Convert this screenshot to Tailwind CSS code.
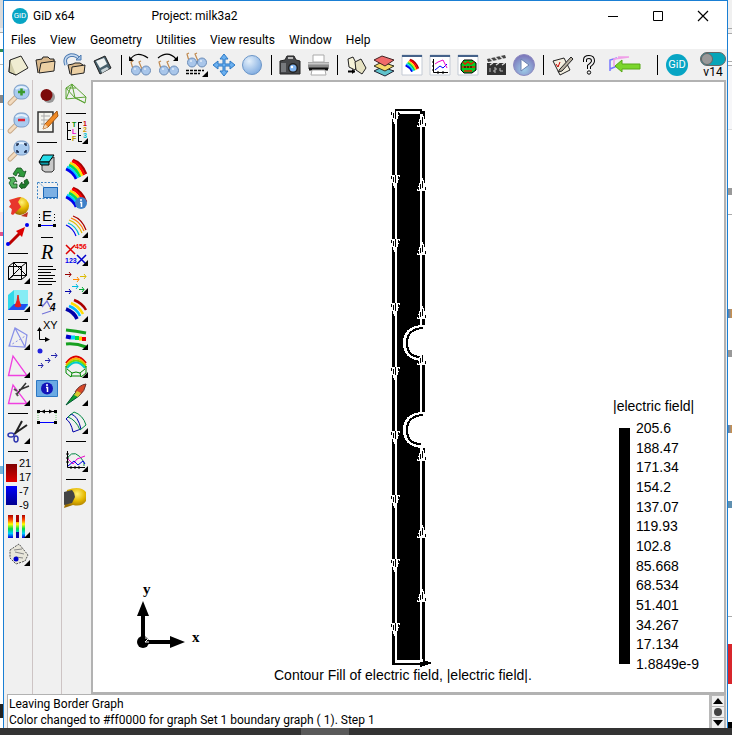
<!DOCTYPE html>
<html lang="en">
<head>
  <meta charset="UTF-8" />
  <meta name="viewport" content="width=device-width, initial-scale=1.0" />
  <title>GiD x64 - Project: milk3a2</title>
  <script src="https://cdn.jsdelivr.net/npm/@tailwindcss/browser@4"></script>
</head>
<body class="h-screen flex flex-col overflow-hidden bg-white text-black text-[12px] leading-4 font-[Roboto,sans-serif]">

  <!-- Shared gradients and small shapes -->
  <svg class="absolute w-0 h-0" aria-hidden="true">
    <defs>
      <radialGradient id="ball" cx="35%" cy="30%" r="75%"><stop offset="0" stop-color="#e4f0fb"/><stop offset="1" stop-color="#7fabe0"/></radialGradient>
      <radialGradient id="play" cx="50%" cy="70%" r="70%"><stop offset="0" stop-color="#9fd0ea"/><stop offset="1" stop-color="#7a72b8"/></radialGradient>
      <radialGradient id="gold" cx="60%" cy="30%" r="70%"><stop offset="0" stop-color="#fff27a"/><stop offset="0.5" stop-color="#e5b800"/><stop offset="1" stop-color="#9a6c00"/></radialGradient>
      <linearGradient id="spectrum" x1="0" y1="0" x2="0" y2="1"><stop offset="0" stop-color="#a00"/><stop offset="0.2" stop-color="#f40"/><stop offset="0.4" stop-color="#ff0"/><stop offset="0.6" stop-color="#0d4"/><stop offset="0.8" stop-color="#0cf"/><stop offset="1" stop-color="#00d"/></linearGradient>
      <symbol id="tri" viewBox="0 0 28 28"><path d="M26 20v6h-6z"/></symbol>
      <symbol id="glasses" viewBox="0 0 24 16">
        <path d="M4 9L2 2l2-1M13 9l-3-7 2-1" fill="none" stroke="#c08a50" stroke-width="1.2"/>
        <path d="M9 10h5" stroke="#5c7fae" stroke-width="2"/>
        <circle cx="7" cy="10.500" r="4.500" fill="#a9c6ea" stroke="#6c8db8"/>
        <circle cx="17" cy="10.500" r="4.500" fill="#a9c6ea" stroke="#6c8db8"/>
        <path d="M5 9h2M15 9h2" stroke="#fff"/>
      </symbol>
      <symbol id="lens" viewBox="0 0 28 28">
        <path d="M12 17l-6 6" stroke="#c9a987" stroke-width="5" stroke-linecap="round"/>
        <path d="M12 17l-6 6" stroke="#f3dcc0" stroke-width="3" stroke-linecap="round"/>
        <rect x="10" y="5" width="15" height="14" rx="6" fill="#a9cbef" stroke="#7b9cc6"/>
        <path d="M12 9q5-4 11 0" stroke="#e4f1fd" stroke-width="2" fill="none"/>
      </symbol>
      <symbol id="rainbow" viewBox="0 0 28 28">
        <g fill="none" stroke-width="2.600">
          <path d="M11 4q9 3 13 14" stroke="#a00"/><path d="M10 5q8 3 12 14" stroke="#f00"/>
          <path d="M8 7q8 3 12 13" stroke="#fd0"/><path d="M7 9q7 3 11 12" stroke="#0d5"/>
          <path d="M5 11q7 3 11 11" stroke="#0cf"/><path d="M4 13q7 3 10 10" stroke="#00e"/>
        </g>
      </symbol>
      <symbol id="win" viewBox="0 0 28 28"><path d="M4 4h20v20H4z" fill="#fff" stroke="#c3cad4"/><path d="M4 4h20v2H4z" fill="#45628a"/></symbol>
      <symbol id="down" viewBox="0 0 10 13"><path d="M0 0h10L6 13H4z" fill="#fff"/><path d="M1.500 1v3M3.500 2v5M5.500 0v8M8.500 1v3" stroke="#000"/></symbol>
      <symbol id="up" viewBox="0 0 10 13"><path d="M0 13h10L6 0H4z" fill="#fff"/><path d="M1.500 12V9M3.500 11V6M5.500 10V3M8.500 12V9" stroke="#000"/></symbol>
    </defs>
  </svg>

  <div class="flex-1 min-h-0 flex">

    <!-- Page showing behind the window, left -->
    <div class="w-[3px] shrink-0 flex flex-col overflow-hidden" aria-hidden="true">
      <div class="h-7 bg-[#dadada]"></div>
      <div class="h-[5px] bg-[#efefef] border-b border-[#aaa]"></div>
      <div class="h-4"></div>
      <div class="h-[3px] bg-[#2e8b57]"></div>
      <div class="h-3"></div>
      <div class="h-px bg-[#bbb]"></div>
      <div class="h-[30px]"></div>
      <div class="h-2 bg-[#888]"></div>
      <div class="h-[27px] border-b border-[#ddd]"></div>
      <div class="h-[82px]"></div>
      <div class="h-6 bg-[#fde8ee] border-b-4 border-[#e0558a]"></div>
      <div class="h-[230px]"></div>
      <div class="h-2 bg-[#7ab6d8]"></div>
      <div class="flex-1"></div>
      <div class="h-[14px] mb-2.5 bg-[#222]"></div>
    </div>

    <!-- Application window -->
    <div class="flex-1 min-w-0 flex flex-col bg-[#f0f0f0] border border-b-0 border-[#1a7fd4]">

      <header class="h-[30px] shrink-0 bg-white flex items-center pl-2">
        <span class="size-4 rounded-full bg-[#07a5c4] text-white text-[8px] leading-4 text-center">GiD</span>
        <span class="ml-[5px]">GiD x64</span>
        <h1 class="ml-[77px]">Project: milk3a2</h1>
        <div class="ml-auto mr-0.5 flex">
          <button class="w-[45px] h-7 grid place-items-center" aria-label="Minimize"><svg class="size-3" viewBox="0 0 12 12"><path d="M1 6.500h10" stroke="#000"/></svg></button>
          <button class="w-[45px] h-7 grid place-items-center" aria-label="Maximize"><svg class="size-3" viewBox="0 0 12 12"><path d="M1.500 1.500h9v9h-9z" fill="none" stroke="#000"/></svg></button>
          <button class="w-[45px] h-7 grid place-items-center" aria-label="Close"><svg class="size-3" viewBox="0 0 12 12"><path d="M1 1l10 10M11 1L1 11" stroke="#000" stroke-width="1.200"/></svg></button>
        </div>
      </header>

      <nav class="h-[18px] shrink-0 bg-white flex items-center gap-[14px] pl-[7px]">
        <button>Files</button>
        <button>View</button>
        <button>Geometry</button>
        <button>Utilities</button>
        <button>View results</button>
        <button>Window</button>
        <button>Help</button>
      </nav>

      <!-- Top toolbar -->
      <div class="h-[31px] shrink-0 flex items-center" role="toolbar" aria-label="Standard">
        <button class="w-7" aria-label="New"><svg class="size-7" viewBox="0 0 28 28"><path d="M6 9l11-4 7 12-12 7-7-3z" fill="#efecd2" stroke="#222"/><path d="M6 9l-1 12 7 3" fill="#cfcba8" stroke="#222"/></svg></button>
        <button class="w-7" aria-label="Open"><svg class="size-7" viewBox="0 0 28 28"><path d="M6 22L4 9l6-1 1-2h5l2 2h4v4" fill="#d8b88c" stroke="#222"/><path d="M7 22l2-10 14-2-1 10z" fill="#ecd0a4" stroke="#222"/></svg></button>
        <button class="w-7" aria-label="Import"><svg class="size-7" viewBox="0 0 28 28"><path d="M10 23L8 14l5-1 2-1h5l3 2v3" fill="#d8b88c" stroke="#222"/><path d="M11 24l1-8 13-2-1 8z" fill="#ecd0a4" stroke="#222"/><path d="M6 14Q3 6 11 4q6 0 8 4" fill="none" stroke="#4d7ab0" stroke-width="3.500"/><path d="M6 14Q3 6 11 4q6 0 8 4" fill="none" stroke="#c5d9f0" stroke-width="1.500"/><path d="M16 9h5V4z" fill="#a4c2e6" stroke="#4d7ab0"/></svg></button>
        <button class="w-7" aria-label="Save"><svg class="size-7" viewBox="0 0 28 28"><path d="M6 10L17 5l6 12-11 6z" fill="#47606c" stroke="#222"/><path d="M8 10l8-3 3 6-7 4z" fill="#eef2f2"/><path d="M13 19l6-3 2 2-7 4z" fill="#c9d5d9"/></svg></button>
        <span class="w-[10px] h-5 flex justify-center"><i class="w-px bg-black"></i></span>
        <button class="w-7" aria-label="Previous view"><svg class="size-7" viewBox="0 0 28 28"><path d="M4 9Q10-1 22 7" fill="none" stroke="#000" stroke-width="1.200"/><path d="M3 5v5h5z"/><use href="#glasses" x="3" y="9" width="24" height="16"/></svg></button>
        <button class="w-7" aria-label="Next view"><svg class="size-7" viewBox="0 0 28 28"><path d="M4 7Q14-1 22 8" fill="none" stroke="#000" stroke-width="1.200"/><path d="M24 5v5h-5z"/><use href="#glasses" x="3" y="9" width="24" height="16"/></svg></button>
        <button class="w-7" aria-label="View styles"><svg class="size-7" viewBox="0 0 28 28"><use href="#glasses" x="3" y="1" width="24" height="16"/><path d="M4 19.500h18M4 22.500h14" stroke="#000" stroke-width="1.500" stroke-dasharray="3 1"/><use href="#tri" width="28" height="28"/></svg></button>
        <button class="w-7" aria-label="Pan"><svg class="size-7" viewBox="0 0 28 28"><path d="M14 3l4 5h-3v5h5v-3l5 4-5 4v-3h-5v5h3l-4 5-4-5h3v-5H8v3l-5-4 5-4v3h5V8h-3z" fill="#6bb0f0" stroke="#2c78c4"/></svg></button>
        <button class="w-7" aria-label="Rotate"><svg class="size-7" viewBox="0 0 28 28"><circle cx="14" cy="14" r="9.500" fill="url(#ball)" stroke="#6c96c8"/></svg></button>
        <span class="w-[10px] h-5 flex justify-center"><i class="w-px bg-black"></i></span>
        <button class="w-7" aria-label="Snapshot"><svg class="size-7" viewBox="0 0 28 28"><path d="M4 10l5-1 2-4h7l2 4 4 1v13H4z" fill="#46474a" stroke="#222"/><path d="M5 12h5v9H5z" fill="#77797d"/><path d="M12 7h5" stroke="#bbb" stroke-width="2"/><circle cx="17" cy="17" r="5" fill="#222"/><circle cx="17" cy="17" r="3.500" fill="#7fb2ee"/><circle cx="16" cy="16" r="1.200" fill="#fff"/></svg></button>
        <button class="w-7" aria-label="Print"><svg class="size-7" viewBox="0 0 28 28"><path d="M9 4h11v7H9z" fill="#fff" stroke="#aaa"/><path d="M4 11h21v7H4z" fill="#8c8c8c"/><path d="M4 12.500h21" stroke="#c8c8c8" stroke-width="2"/><path d="M5 18h19" stroke="#111" stroke-width="3"/><path d="M8 19h13l1 5H7z" fill="#fff" stroke="#aaa"/></svg></button>
        <span class="w-[10px] h-5 flex justify-center"><i class="w-px bg-black"></i></span>
        <button class="w-7" aria-label="Preprocess"><svg class="size-7" viewBox="0 0 28 28"><path d="M6 8l5-2 4 8-2 5-6-3z" fill="#f6f3d8" stroke="#222"/><path d="M13 11l6-3 5 9-4 6-6-4z" fill="#e6e2c2" stroke="#222"/><path d="M6 20.500h7" stroke="#000" stroke-width="2"/><path d="M10 18l3 2.500-3 2.500z"/></svg></button>
        <button class="w-7" aria-label="Layers"><svg class="size-7" viewBox="0 0 28 28"><path d="M4 20l8-4 12 4-9 5z" fill="#5fc3cc" stroke="#223"/><path d="M4 15l8-4 12 4-9 5z" fill="#f5d96a" stroke="#332"/><path d="M4 9l8-4 12 4-9 6z" fill="#f06a6a" stroke="#422"/></svg></button>
        <button class="w-7" aria-label="Contour window"><svg class="size-7" viewBox="0 0 28 28"><use href="#win" width="28" height="28"/><use href="#rainbow" x="5" y="6" width="18" height="18"/></svg></button>
        <button class="w-7" aria-label="Graphs window"><svg class="size-7" viewBox="0 0 28 28"><use href="#win" width="28" height="28"/><path d="M7.500 8v13.500H22M6 11h2M6 15h2M6 19h2M12 20v3M17 20v3" fill="none" stroke="#000"/><path d="M9 19l5-4 3 2 4-4" fill="none" stroke="#00f"/><path d="M9 13l3-2 5-2 4 8" fill="none" stroke="#e0c"/></svg></button>
        <button class="w-7" aria-label="Deformation window"><svg class="size-7" viewBox="0 0 28 28"><use href="#win" width="28" height="28"/><path d="M7 13l3-4h8l4 3v7l-4 3h-8l-3-3z" fill="#0c2" stroke="#000"/><path d="M9 11l2 2 3-2 3 2 3-2M8 16h13M10 20h8" fill="none" stroke="#d20" stroke-width="1.500"/><path d="M10 16h8" stroke="#000" stroke-dasharray="2 1"/></svg></button>
        <button class="w-7" aria-label="Animate"><svg class="size-7" viewBox="0 0 28 28"><path d="M5 12h19v12H5z" fill="#333"/><path d="M5 8l18-4 1 3L6 11z" fill="#444"/><path d="M8 7l3 3M13 6l3 3M18 5l3 3M8 14l3-2M14 14l3-2M20 14l3-2" stroke="#ddd" stroke-width="1.500"/><path d="M8 17v4M12 17h2v2h-2v2h2M18 17v3h3" stroke="#bbb" fill="none"/></svg></button>
        <button class="w-7" aria-label="Play"><svg class="size-7" viewBox="0 0 28 28"><circle cx="14" cy="14" r="10.500" fill="url(#play)" stroke="#8d8ac0"/><path d="M11 8v12l8-6z" fill="#fff" stroke="#6a80b0"/></svg></button>
        <span class="w-[10px] h-5 flex justify-center"><i class="w-px bg-black"></i></span>
        <button class="w-7" aria-label="Preferences"><svg class="size-7" viewBox="0 0 28 28"><path d="M5 10l11-3 6 12-10 5z" fill="#f3efe0" stroke="#222"/><path d="M8 13l2 3 2-5" fill="none" stroke="#c00"/><path d="M23 6L12 18l-2 3 4-1L25 8z" fill="#b7b0a0" stroke="#222"/></svg></button>
        <button class="w-7" aria-label="Help"><svg class="size-7" viewBox="0 0 28 28"><path d="M9 11V9q0-3 4-3t4 4q0 2-4 5v3" fill="none" stroke="#000" stroke-width="4"/><path d="M9 11V9q0-3 4-3t4 4q0 2-4 5v3" fill="none" stroke="#f0f0f0" stroke-width="2"/><circle cx="13" cy="21.500" r="1.700" fill="#f0f0f0" stroke="#000"/></svg></button>
        <button class="w-12" aria-label="Back to preprocess"><svg class="w-11 h-7" viewBox="0 0 44 28"><path d="M6 20V9l7-2M6 18l7-3" fill="none" stroke="#77f" stroke-width="1.500"/><path d="M14 6h11M10 15V8l15-2" fill="none" stroke="#f0a0e8" stroke-width="1.500"/><path d="M11 15l7-6v4h18v5H18v3z" fill="#7bd62c" stroke="#58a818"/></svg></button>
        <span class="w-[10px] h-5 flex justify-center"><i class="w-px bg-black"></i></span>
        <button class="w-[30px] grid place-items-center" aria-label="GiD home"><span class="size-[22px] rounded-full bg-[#07a5c4] text-white text-[11px] leading-[22px] text-center">GiD</span></button>
        <label class="ml-auto w-7 flex flex-col items-center text-[12px] leading-[12px]">
          <input type="checkbox" checked class="peer sr-only" />
          <span class="w-[26px] h-[14px] rounded-full bg-[#07a5b8] border border-[#666]"><i class="block size-3 rounded-full bg-[#999] border border-[#666]"></i></span>
          v14
        </label>
      </div>

      <div class="flex-1 min-h-0 flex">

        <!-- Left toolbars -->
        <div class="w-[29px] shrink-0 flex flex-col items-start border-r border-[#cdc4c4]" role="toolbar" aria-label="View">
          <button class="size-7" aria-label="Zoom in"><svg viewBox="0 0 28 28"><use href="#lens" width="28" height="28"/><path d="M14 12h7M17.500 8.500v7" stroke="#3a9a2c" stroke-width="2.500"/></svg></button>
          <button class="size-7" aria-label="Zoom out"><svg viewBox="0 0 28 28"><use href="#lens" width="28" height="28"/><path d="M14 12h7" stroke="#e02030" stroke-width="2.500"/></svg></button>
          <button class="size-7" aria-label="Zoom frame"><svg viewBox="0 0 28 28"><use href="#lens" width="28" height="28"/><path d="M13 10V8h2M20 8h2v2M22 14v2h-2M15 16h-2v-2" fill="none" stroke="#124" stroke-width="1.500"/></svg></button>
          <button class="size-7" aria-label="Redraw"><svg viewBox="0 0 28 28"><g stroke="#124d1b" stroke-width="0.800"><path d="M9 10l4-6h4l3 4 2-1-2 6-6-1 2-1-2-3-2 4z" fill="#2f9a3c"/><path d="M4 14l6-1 3 5-2-1-2 3h4v4H8l-3-5 2-3z" fill="#55b560"/><path d="M23 15l2 4-4 5h-3v1l-3-3 3-4v2h3l-1-3z" fill="#1f7a2c"/></g></svg></button>
          <button class="size-7" aria-label="Render"><svg viewBox="0 0 28 28"><circle cx="16" cy="14" r="9" fill="url(#gold)"/><path d="M5 8l7-2 5-1-3 5 3 5-5 5-3 3-2-1 1-5-3-2 2-3z" fill="#e8362c"/><path d="M17 24l7-4-1 5z" fill="#c03020"/></svg></button>
          <button class="size-7" aria-label="Rotate trackball"><svg viewBox="0 0 28 28"><path d="M5 24L18 11" stroke="#b00" stroke-width="3"/><path d="M21 7l-9 4 6 6z" fill="#d00"/><circle cx="23" cy="5" r="2" fill="#00e"/><circle cx="4" cy="24" r="2" fill="#00e"/></svg></button>
          <span class="w-7 h-[10px] px-1 flex items-center"><i class="h-px w-full bg-black"></i></span>
          <button class="size-7" aria-label="Boundaries"><svg viewBox="0 0 28 28"><path d="M4.500 8.500h13v13h-13zM9.500 4.500h13v13h-13zM4.500 8.500l5-4M17.500 8.500l5-4M4.500 21.500l5-4M17.500 21.500l5-4M4.500 21.500l13-13M9.500 4.500l13 13" fill="none" stroke="#000"/><use href="#tri" width="28" height="28"/></svg></button>
          <button class="size-7" aria-label="Volume"><svg viewBox="0 0 28 28"><path d="M4 9l6-5h14v16l-4 4H4z" fill="#30d8e8"/><path d="M10 4h14v14H10z" fill="#86ecf4"/><path d="M4 24l6-6h14l-4 6z" fill="#2050f0"/><path d="M11 20l2-5 1-6 1 6 2 5-3 1z" fill="#e8201c" stroke="#e8201c"/><use href="#tri" width="28" height="28"/></svg></button>
          <span class="w-7 h-[10px] px-1 flex items-center"><i class="h-px w-full bg-black"></i></span>
          <button class="size-7" aria-label="Tetrahedra"><svg viewBox="0 0 28 28"><path d="M5 22L11 4l12 7-2 12zM11 4l10 19" fill="none" stroke="#8890e8" stroke-width="1.200"/><path d="M5 22l18-11" stroke="#8890e8" stroke-dasharray="2 2"/><use href="#tri" width="28" height="28"/></svg></button>
          <button class="size-7" aria-label="Triangles"><svg viewBox="0 0 28 28"><path d="M4.500 23.500L9 4l14 19.500z" fill="none" stroke="#f040e0" stroke-width="1.300"/><use href="#tri" width="28" height="28"/></svg></button>
          <button class="size-7" aria-label="Cut triangles"><svg viewBox="0 0 28 28"><path d="M4.500 23.500L9 5l14 18.500z" fill="none" stroke="#f040e0" stroke-width="1.300"/><path d="M13 14L22 3M15 10l10-4" stroke="#333" stroke-width="1.500"/><path d="M12 13l2 3M13 11l-3-2" stroke="#555" stroke-width="2"/><use href="#tri" width="28" height="28"/></svg></button>
          <span class="w-7 h-[10px] px-1 flex items-center"><i class="h-px w-full bg-black"></i></span>
          <button class="size-7" aria-label="Cut"><svg viewBox="0 0 28 28"><path d="M11 16L18 3M10 16l13-9" stroke="#222" stroke-width="2"/><ellipse cx="7" cy="17" rx="3" ry="2" fill="none" stroke="#3038b0" stroke-width="1.500"/><ellipse cx="12" cy="21" rx="2" ry="3" fill="none" stroke="#3038b0" stroke-width="1.500"/><use href="#tri" width="28" height="28"/></svg></button>
          <span class="w-7 h-[10px] px-1 flex items-center"><i class="h-px w-full bg-black"></i></span>
          <button class="w-7 h-14 flex items-center pl-0.5 gap-0.5 font-['Liberation_Sans',sans-serif] text-[11px] leading-[14px] text-left" aria-label="Contour limits">
            <span class="w-[11px] flex flex-col gap-1"><i class="h-[18px] bg-linear-to-b from-[#800000] to-[#e00000]"></i><i class="h-[19px] bg-linear-to-b from-[#0000ff] to-[#000090]"></i></span>
            <span class="flex flex-col"><span>21</span><span>17</span><span>-7</span><span>-9</span></span>
          </button>
          <button class="size-7" aria-label="Colour scale"><svg viewBox="0 0 28 28"><path d="M4 3h5v23H4zM12 3h3v23h-3zM18 3h3v23h-3z" fill="url(#spectrum)"/><path d="M12 3h3v7h-3z" fill="#a00"/><path d="M12 20h3v6h-3z" fill="#00a"/><use href="#tri" width="28" height="28"/></svg></button>
          <button class="size-7" aria-label="Options"><svg viewBox="0 0 28 28"><path d="M6 10l9-6 9 11-3 6-9 3-6-6z" fill="#e8e6da" stroke="#555" stroke-dasharray="2 1"/><path d="M10 10l8-1M11 12l9 2M12 17l7 1" stroke="#888"/><circle cx="12" cy="19" r="2.500" fill="#00c"/><use href="#tri" width="28" height="28"/></svg></button>
        </div>

        <div class="w-[29px] shrink-0 flex flex-col items-start border-r border-[#cdc4c4]" role="toolbar" aria-label="Tools">
          <button class="size-7" aria-label="Point"><svg viewBox="0 0 28 28"><circle cx="16" cy="17" r="6" fill="#999"/><circle cx="13.500" cy="15" r="6" fill="#7c0a0a"/></svg></button>
          <button class="size-7" aria-label="Notes"><svg viewBox="0 0 28 28"><path d="M5 4h15v20H5z" fill="#f4f4ee" stroke="#333" stroke-width="1.500"/><path d="M8 8h9M8 12h9M8 16h6M11 5v14" stroke="#aaa"/><path d="M24 3L12 16l-2 5 5-2L25 8z" fill="#f08a24" stroke="#a55510"/><path d="M12 16l3 3-5 2z" fill="#f3d4b0"/></svg></button>
          <span class="w-7 h-3 px-1 flex items-center"><i class="h-px w-full bg-black"></i></span>
          <button class="size-7" aria-label="Erase"><svg viewBox="0 0 28 28"><path d="M9 16v6l3 2h7l2-2V9z" fill="#c8c8c8" stroke="#333"/><path d="M6 14l4-7h11l-5 7z" fill="#26dce8" stroke="#000"/><path d="M6 14h10v3H8z" fill="#0a9aa8" stroke="#000"/></svg></button>
          <button class="size-7" aria-label="Dimension frame"><svg viewBox="0 0 28 28"><path d="M4.500 6.500h20v16h-20z" fill="none" stroke="#3b82c4" stroke-dasharray="2 1.500"/><path d="M10.500 11.500h14v10h-14z" fill="#7cb0e4" stroke="#1c68b8"/><path d="M5 6l6 5" stroke="#3b82c4" stroke-dasharray="1 1"/></svg></button>
          <button class="size-7" aria-label="Label"><svg viewBox="0 0 28 28"><text x="9" y="17" font-family="Liberation Sans" font-size="15">E</text><path d="M6.500 10v8M21.500 10v8" stroke="#000" stroke-dasharray="1 2"/><path d="M6 21.500h16" stroke="#00f"/><path d="M5 20h3v3H5zM20 20h3v3h-3z"/></svg></button>
          <span class="w-7 h-[10px] px-2 flex items-center"><i class="h-px w-full bg-black"></i></span>
          <button class="w-7 h-5 font-['Liberation_Serif',serif] italic text-[20px] leading-5" aria-label="Real values">R</button>
          <button class="size-7" aria-label="List"><svg viewBox="0 0 28 28"><path d="M5 4.500h15M5 7.500h18M5 10.500h13M5 13.500h17M5 16.500h15M5 19.500h18M5 22.500h14" stroke="#000"/></svg></button>
          <button class="size-7" aria-label="Numbering"><svg viewBox="0 0 28 28"><g font-family="Liberation Sans" font-size="10" font-weight="bold" font-style="italic"><text x="5" y="16">1</text><text x="14" y="10">2</text><text x="17" y="21">4</text></g><path d="M9 17l5-6 3 6M9 24l9-3" fill="none" stroke="#7474d8" stroke-width="1.300"/></svg></button>
          <button class="size-7" aria-label="Axes XY"><svg viewBox="0 0 28 28"><text x="10" y="11" font-family="Liberation Sans" font-size="11">XY</text><path d="M6.500 10v11.500H13" fill="none" stroke="#000"/><path d="M4 13l2.500-4L9 13zM12 19l5 2.500-5 2.500z"/></svg></button>
          <button class="size-7" aria-label="Move"><svg viewBox="0 0 28 28"><circle cx="7" cy="5" r="2.500" fill="#22d"/><path d="M5 19.500h5M8 17l2 2.500-2 2.500M12 14.500h5M15 12l2 2.500-2 2.500M18 9.500h6M22 7l2 2.500-2 2.500" fill="none" stroke="#22a"/></svg></button>
          <button class="size-7" aria-label="Information"><svg viewBox="0 0 28 28"><path d="M3.500 6.500h21v16h-21z" fill="#6aaae4" stroke="#2c78c4"/><circle cx="14" cy="14.500" r="6" fill="#1414b8"/><path d="M14 10v2M13 13.500h1.500V18" stroke="#fff" stroke-width="1.500" fill="none"/></svg></button>
          <button class="size-7" aria-label="Distance"><svg viewBox="0 0 28 28"><path d="M5 9.500h18" stroke="#000"/><path d="M4 8h3v3H4zM21 8h3v3h-3zM8 9.500l4-2v4zM20 9.500l-4-2v4z"/><path d="M5 11v8M23 11v8" stroke="#7c7" stroke-dasharray="1 1"/><path d="M5 20.500h18" stroke="#00f"/><path d="M4 19h3v3H4zM21 19h3v3h-3z"/></svg></button>
        </div>

        <div class="w-[29px] shrink-0 flex flex-col items-start" role="toolbar" aria-label="Results">
          <button class="size-7" aria-label="Mesh"><svg viewBox="0 0 28 28"><path d="M4 8l6-4 14 13-1 6-9-5-10 1zM4 8l9 10 10 5M10 4l3 14 11-1M10 4L4 19M4 8l10 0" fill="none" stroke="#5ca434"/></svg></button>
          <span class="w-7 h-[10px] px-1 flex items-center"><i class="h-px w-full bg-black"></i></span>
          <button class="size-7" aria-label="Default view"><svg viewBox="0 0 28 28"><path d="M4 4.500h4M5.500 5v17M5 12.500h4M5 21.500h4M16 4.500h4M16.500 4v20M16 10.500h3M16 17.500h3M16 23.500h4" stroke="#000"/><g font-family="Liberation Sans" font-size="7" font-weight="bold"><text x="10" y="9" fill="#080">T</text><text x="10" y="16" fill="#e0c">L</text><text x="10" y="23" fill="#b90">F</text><text x="21" y="8" fill="#c00">1</text><text x="21" y="14" fill="#c90">2</text><text x="21" y="20" fill="#0bc">3</text></g><use href="#tri" width="28" height="28"/></svg></button>
          <span class="w-7 h-[10px] px-1 flex items-center"><i class="h-px w-full bg-black"></i></span>
          <button class="size-7" aria-label="Contour fill"><svg viewBox="0 0 28 28"><use href="#rainbow" width="28" height="28"/><use href="#tri" width="28" height="28"/></svg></button>
          <button class="size-7" aria-label="Contour information"><svg viewBox="0 0 28 28"><use href="#rainbow" width="28" height="28"/><circle cx="19" cy="19" r="6" fill="#3f80c8"/><path d="M19 15v2M18 18.500h1.500V23" stroke="#fff" stroke-width="1.500" fill="none"/></svg></button>
          <button class="size-7" aria-label="Contour lines"><svg viewBox="0 0 28 28"><g fill="none" stroke-width="1.200"><path d="M11 4q9 3 13 14" stroke="#a00"/><path d="M9 6q9 3 13 13" stroke="#f70"/><path d="M7 8q9 3 13 13" stroke="#db0"/><path d="M6 11q8 3 11 12" stroke="#0bc"/><path d="M4 13q7 3 10 11" stroke="#00e"/></g><use href="#tri" width="28" height="28"/></svg></button>
          <button class="size-7" aria-label="Min max"><svg viewBox="0 0 28 28"><path d="M4 5l9 9M13 5l-9 9" stroke="#d00" stroke-width="1.500"/><path d="M15 15l9 9M24 15l-9 9" stroke="#00c" stroke-width="1.500"/><g font-family="Liberation Sans" font-size="7" font-weight="bold"><text x="13" y="9" fill="#e00">456</text><text x="3" y="23" fill="#00e">123</text></g><use href="#tri" width="28" height="28"/></svg></button>
          <button class="size-7" aria-label="Vectors"><svg viewBox="0 0 28 28"><g fill="none"><path d="M3 6.500h6M7 4l2 2.500L7 9" stroke="#900"/><path d="M11 11.500h6M15 9l2 2.500-2 2.500" stroke="#f80"/><path d="M18 8.500h6M22 6l2 2.500-2 2.500" stroke="#db0"/><path d="M10 18.500h6M14 16l2 2.500-2 2.500" stroke="#0bd"/><path d="M17 21.500h5M20 19l2 2.500-2 2.500" stroke="#0a3"/><path d="M3 23.500h6M7 21l2 2.500L7 26" stroke="#00a"/></g><use href="#tri" width="28" height="28"/></svg></button>
          <button class="size-7" aria-label="Contour ranges"><svg viewBox="0 0 28 28"><g fill="none" stroke-width="2.500"><path d="M12 4q8 3 12 10" stroke="#a00"/><path d="M9 7q8 3 12 11" stroke="#fd0"/><path d="M7 10q8 3 11 10" stroke="#0bf"/><path d="M4 13q8 3 11 10" stroke="#00a" stroke-width="3.500"/></g><use href="#tri" width="28" height="28"/></svg></button>
          <button class="size-7" aria-label="Stream lines"><svg viewBox="0 0 28 28"><path d="M4 6q10 1 20 3M4 20q10-1 20 3" fill="none" stroke="#16a020" stroke-width="3"/><path d="M4 12.500l5 1" stroke="#00c" stroke-width="4"/><path d="M9 13.500h4" stroke="#0cf" stroke-width="4"/><path d="M13 14h4" stroke="#0d4" stroke-width="4"/><path d="M17 14.500h3" stroke="#fc0" stroke-width="4"/><path d="M20 15h4" stroke="#e00" stroke-width="4"/><use href="#tri" width="28" height="28"/></svg></button>
          <button class="size-7" aria-label="Surface"><svg viewBox="0 0 28 28"><g fill="none" stroke-width="2"><path d="M4 11q10-13 20 0" stroke="#d00"/><path d="M4 13q10-13 20 0" stroke="#fa0"/><path d="M4 15q10-13 20 0" stroke="#7d0"/><path d="M5 16q9-11 18 0" stroke="#0cc"/><path d="M4 14v7l5 4 1-4q4-2 8 0l1 4 5-4v-7M9 24h10M5 17l5 4M23 17l-5 4" stroke="#080" stroke-width="1"/></g><use href="#tri" width="28" height="28"/></svg></button>
          <button class="size-7" aria-label="Line diagram"><svg viewBox="0 0 28 28"><path d="M4 25L13 13l4 3z" fill="#10a030" stroke="#053"/><path d="M13 12q4-7 11-8-1 7-7 12z" fill="#d84828" stroke="#633"/><path d="M12 15l3-4 4 2-3 4z" fill="#d8c830"/><use href="#tri" width="28" height="28"/></svg></button>
          <button class="size-7" aria-label="Deform"><svg viewBox="0 0 28 28"><path d="M4 11q5 3 7 13l8-3Q16 8 9 6z" fill="none" stroke="#00a"/><path d="M6 9l6-5q9 3 12 13l-6 5Q14 12 6 9z" fill="none" stroke="#084"/><use href="#tri" width="28" height="28"/></svg></button>
          <span class="w-7 h-[10px] px-1 flex items-center"><i class="h-px w-full bg-black"></i></span>
          <button class="size-7" aria-label="Graphs"><svg viewBox="0 0 28 28"><path d="M5.500 5v16.500H23M4 8h3M4 12h3M4 16h3M9 20v3M13 20v3M17 20v3" fill="none" stroke="#000"/><path d="M6 11q7-9 16 5v4" fill="none" stroke="#084"/><path d="M6 13l5 5 4-5 8-3" fill="none" stroke="#e0c"/><path d="M6 20l6-5 4 4 5-4 2 3" fill="none" stroke="#00e"/><use href="#tri" width="28" height="28"/></svg></button>
          <span class="w-7 h-[10px] px-1 flex items-center"><i class="h-px w-full bg-black"></i></span>
          <button class="size-7" aria-label="Rotate body"><svg viewBox="0 0 28 28"><path d="M5 6q13-5 19 2v9q-4 6-13 4l-9 3 1-4z" fill="url(#gold)"/><path d="M2 8l8-2q3 3 3 7l-3 6-8 2z" fill="#444"/></svg></button>
        </div>

        <!-- Drawing area -->
        <main class="relative flex-1 min-w-0 bg-white border-2 border-[#b2b2b2] mr-px font-['Liberation_Sans',sans-serif] text-[14px]">
          <svg class="absolute left-[292px] top-[23px] w-[50px] h-[565px]" viewBox="0 0 50 565" shape-rendering="crispEdges" role="img" aria-label="Contour fill model">
            <path d="M10 4h27v2h3v554H7V6h3z"/>
            <path d="M10 9h2v546h-2zM35 9h2v546h-2zM15 6h20v3H15zM10 555h28v3H10z" fill="#fff"/>
            <path d="M35 554l12 4-12 4z"/>
            <path d="M10 558h27v2H10z"/>
            <path d="M41 220h-5q-18 2-18 18t18 18h5zM41 307h-5q-18 2-18 18t18 18h5z" fill="#fff"/>
            <path d="M38 223q-16 1-16 15t14 14M38 310q-16 1-16 15t14 14" fill="none" stroke="#000" stroke-width="2"/>
            <path d="M35 554h3v3h-3z" fill="#fff"/>
            <use href="#down" x="5" y="6" width="10" height="13"/>
            <use href="#down" x="5" y="70" width="10" height="13"/>
            <use href="#down" x="5" y="134" width="10" height="13"/>
            <use href="#down" x="5" y="198" width="10" height="13"/>
            <use href="#down" x="5" y="262" width="10" height="13"/>
            <use href="#down" x="5" y="326" width="10" height="13"/>
            <use href="#down" x="5" y="390" width="10" height="13"/>
            <use href="#down" x="5" y="454" width="10" height="13"/>
            <use href="#down" x="5" y="518" width="10" height="13"/>
            <use href="#up" x="32" y="9" width="10" height="13"/>
            <use href="#up" x="32" y="73" width="10" height="13"/>
            <use href="#up" x="32" y="137" width="10" height="13"/>
            <use href="#up" x="32" y="201" width="10" height="13"/>
            <use href="#up" x="32" y="247" width="10" height="13"/>
            <use href="#up" x="32" y="343" width="10" height="13"/>
            <use href="#up" x="32" y="420" width="10" height="13"/>
            <use href="#up" x="32" y="484" width="10" height="13"/>
          </svg>

          <svg class="absolute left-[42px] bottom-[38px] w-[76px] h-[74px]" viewBox="0 -8 76 74" role="img" aria-label="Axes">
            <path d="M6 56V27h4v25h28v4z"/>
            <path d="M2 28L8 13l6 15zM35 48l15 6-15 6z"/>
            <circle cx="8" cy="54" r="6"/>
            <path d="M10 50h4l-4 4h4" fill="none" stroke="#fff"/>
            <g font-family="Liberation Serif" font-size="15" font-weight="bold"><text x="8" y="6">y</text><text x="57" y="54">x</text></g>
          </svg>

          <p class="absolute left-[181px] bottom-2 leading-[18px] whitespace-nowrap">Contour Fill of electric field, |electric field|.</p>

          <section class="absolute right-[23px] bottom-5 w-[88px] leading-4">
            <h2 class="whitespace-nowrap">|electric field|</h2>
            <div class="mt-1.5 h-[252px] flex gap-1.5">
              <i class="w-[11px] ml-1.5 my-2 bg-black"></i>
              <ul class="flex-1 flex flex-col justify-between whitespace-nowrap">
                <li>205.6</li>
                <li>188.47</li>
                <li>171.34</li>
                <li>154.2</li>
                <li>137.07</li>
                <li>119.93</li>
                <li>102.8</li>
                <li>85.668</li>
                <li>68.534</li>
                <li>51.401</li>
                <li>34.267</li>
                <li>17.134</li>
                <li>1.8849e-9</li>
              </ul>
            </div>
          </section>
        </main>
      </div>

      <!-- Messages -->
      <footer class="h-[34px] shrink-0 flex ml-[3px] mr-px bg-white border-l border-t border-[#b2b2b2]">
        <div class="flex-1 min-w-0 pl-px pt-px whitespace-nowrap" role="log">
          <p>Leaving Border Graph</p>
          <p>Color changed to #ff0000 for graph Set 1 boundary graph ( 1). Step 1</p>
        </div>
        <div class="w-[17px] bg-[#b8b8b8] flex flex-col items-center gap-px pt-px">
          <button class="w-3 h-2.5 bg-[#f0f0f0] grid place-items-center" aria-label="Scroll up"><svg class="w-2.5 h-1.5" viewBox="0 0 10 6"><path d="M0 6l5-6 5 6z"/></svg></button>
          <button class="w-3 h-2.5 bg-[#f0f0f0] grid place-items-center" aria-label="Thumb"><i class="size-2 rounded-full bg-[#444]"></i></button>
          <button class="w-3 h-2.5 bg-[#f0f0f0] grid place-items-center" aria-label="Scroll down"><svg class="w-2.5 h-1.5" viewBox="0 0 10 6"><path d="M0 0l5 6 5-6z"/></svg></button>
        </div>
      </footer>
    </div>

    <!-- Page showing behind the window, right -->
    <div class="w-1 shrink-0 flex flex-col overflow-hidden" aria-hidden="true">
      <div class="h-[29px] bg-[#f0f0f0] border-b border-[#aaa]"></div>
      <div class="h-[5px] bg-[#f0f0f0] border-b border-[#aaa]"></div>
      <div class="h-[27px]"></div>
      <div class="h-[5px] border-y border-[#aaa]"></div>
      <div class="h-16 bg-[#f7f7f9] border-b border-[#ddd]"></div>
      <div class="h-[58px]"></div>
      <div class="h-[7px] bg-[#999]"></div>
      <div class="h-5 border-b border-[#aaa]"></div>
      <div class="h-[94px]"></div>
      <div class="h-[9px] bg-linear-to-r from-[#4080c0] to-[#d89030]"></div>
      <div class="h-[32px]"></div>
      <div class="h-[7px] bg-[#999]"></div>
      <div class="h-[68px]"></div>
      <div class="h-2 bg-linear-to-r from-[#4080c0] to-[#d89030]"></div>
      <div class="h-[68px]"></div>
      <div class="h-[7px] bg-[#6090b0]"></div>
      <div class="h-[109px] border-b border-[#aaa]"></div>
      <div class="h-[27px]"></div>
      <div class="h-10 bg-[#d8262c]"></div>
      <div class="flex-1"></div>
      <div class="h-1.5 bg-black"></div>
    </div>
  </div>

  <!-- Desktop task bar edge -->
  <div class="h-[7px] shrink-0 bg-[#333] flex justify-center" aria-hidden="true">
    <i class="w-12 mr-[82px] bg-[#5a5a5a]"></i>
  </div>
</body>
</html>
